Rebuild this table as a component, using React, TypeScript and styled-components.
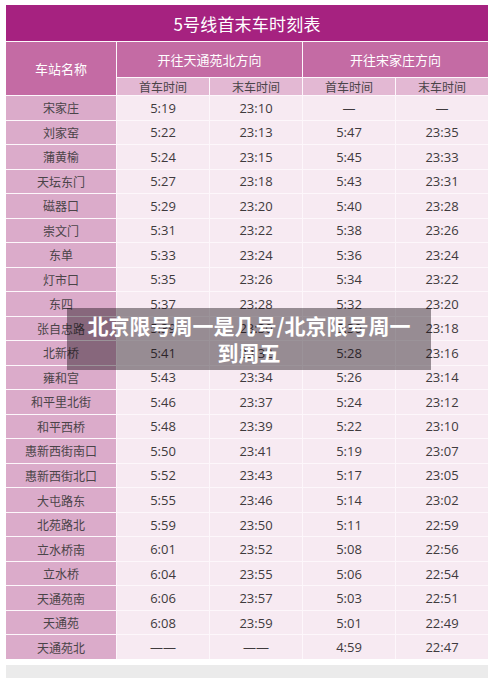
import styled, { createGlobalStyle } from 'styled-components';

const GlobalStyle = createGlobalStyle`
  html, body {
    margin: 0;
    padding: 0;
    background: #ffffff;
  }
  body {
    font-family: "Noto Sans CJK SC", "Noto Sans", sans-serif;
  }
`;

// 时刻表数据
const stations: [string, string, string, string, string][] = [
  ['宋家庄', '5:19', '23:10', '—', '—'],
  ['刘家窑', '5:22', '23:13', '5:47', '23:35'],
  ['蒲黄榆', '5:24', '23:15', '5:45', '23:33'],
  ['天坛东门', '5:27', '23:18', '5:43', '23:31'],
  ['磁器口', '5:29', '23:20', '5:40', '23:28'],
  ['崇文门', '5:31', '23:22', '5:38', '23:26'],
  ['东单', '5:33', '23:24', '5:36', '23:24'],
  ['灯市口', '5:35', '23:26', '5:34', '23:22'],
  ['东四', '5:37', '23:28', '5:32', '23:20'],
  ['张自忠路', '5:39', '23:30', '5:30', '23:18'],
  ['北新桥', '5:41', '23:32', '5:28', '23:16'],
  ['雍和宫', '5:43', '23:34', '5:26', '23:14'],
  ['和平里北街', '5:46', '23:37', '5:24', '23:12'],
  ['和平西桥', '5:48', '23:39', '5:22', '23:10'],
  ['惠新西街南口', '5:50', '23:41', '5:19', '23:07'],
  ['惠新西街北口', '5:52', '23:43', '5:17', '23:05'],
  ['大屯路东', '5:55', '23:46', '5:14', '23:02'],
  ['北苑路北', '5:59', '23:50', '5:11', '22:59'],
  ['立水桥南', '6:01', '23:52', '5:08', '22:56'],
  ['立水桥', '6:04', '23:55', '5:06', '22:54'],
  ['天通苑南', '6:06', '23:57', '5:03', '22:51'],
  ['天通苑', '6:08', '23:59', '5:01', '22:49'],
  ['天通苑北', '——', '——', '4:59', '22:47'],
];

const Page = styled.div`
  position: relative;
  width: 500px;
  height: 678px;
  overflow: hidden;
  background: #ffffff;
`;

const Sheet = styled.div`
  padding: 5px 0 0 6px;
  width: 482px;
`;

const TitleBar = styled.div`
  height: 36px;
  background: #a62280;
  color: #ffffff;
  font-size: 17px;
  display: flex;
  align-items: center;
  justify-content: center;
  letter-spacing: 0.2px;
`;

const Grid = styled.div`
  display: grid;
  grid-template-columns: 110px 92px 92px 92px 92px;
  grid-template-rows: 35px 17px repeat(23, 23.52px);
  gap: 1px;
  background: #fdf7fb;
  padding-top: 1px;
`;

const Cell = styled.div<{ $tone: 'head' | 'sub' | 'station' | 'data' }>`
  display: flex;
  align-items: center;
  justify-content: center;
  white-space: nowrap;
  background: ${(p) =>
    p.$tone === 'head'
      ? '#c46ba4'
      : p.$tone === 'sub'
      ? '#e3b8d3'
      : p.$tone === 'station'
      ? '#dbabca'
      : '#f7eaf2'};
  color: ${(p) => (p.$tone === 'head' ? '#ffffff' : '#4a4448')};
  font-size: ${(p) => (p.$tone === 'head' ? '13px' : '12px')};
`;

const StationHead = styled(Cell)`
  grid-row: 1 / span 2;
  font-size: 13px;
`;

const DirectionHead = styled(Cell)`
  grid-column: span 2;
`;

const TimeCell = styled(Cell)`
  font-family: "Open Sans", "Noto Sans", sans-serif;
  font-size: 13px;
  color: #3f3a3d;
`;

const Footer = styled.div`
  margin-top: 6px;
  height: 20px;
  background: #ebebeb;
`;

const Overlay = styled.div`
  position: absolute;
  left: 67px;
  top: 308px;
  width: 364px;
  box-sizing: border-box;
  padding: 4px 16px;
  background: rgba(20, 10, 16, 0.42);
  color: #ffffff;
  font-family: "Noto Sans CJK SC", "Noto Sans", sans-serif;
  font-weight: 700;
  font-size: 21px;
  line-height: 27px;
  text-align: center;
`;

export default function App() {
  return (
    <Page>
      <GlobalStyle />
      <Sheet>
        <TitleBar>5号线首末车时刻表</TitleBar>
        <Grid>
          <StationHead $tone="head">车站名称</StationHead>
          <DirectionHead $tone="head">开往天通苑北方向</DirectionHead>
          <DirectionHead $tone="head">开往宋家庄方向</DirectionHead>
          <Cell $tone="sub">首车时间</Cell>
          <Cell $tone="sub">末车时间</Cell>
          <Cell $tone="sub">首车时间</Cell>
          <Cell $tone="sub">末车时间</Cell>
          {stations.map(([name, ...times]) => (
            <>
              <Cell key={name} $tone="station">{name}</Cell>
              {times.map((t, i) => (
                <TimeCell key={name + i} $tone="data">{t}</TimeCell>
              ))}
            </>
          ))}
        </Grid>
        <Footer />
      </Sheet>
      <Overlay>北京限号周一是几号/北京限号周一到周五</Overlay>
    </Page>
  );
}
